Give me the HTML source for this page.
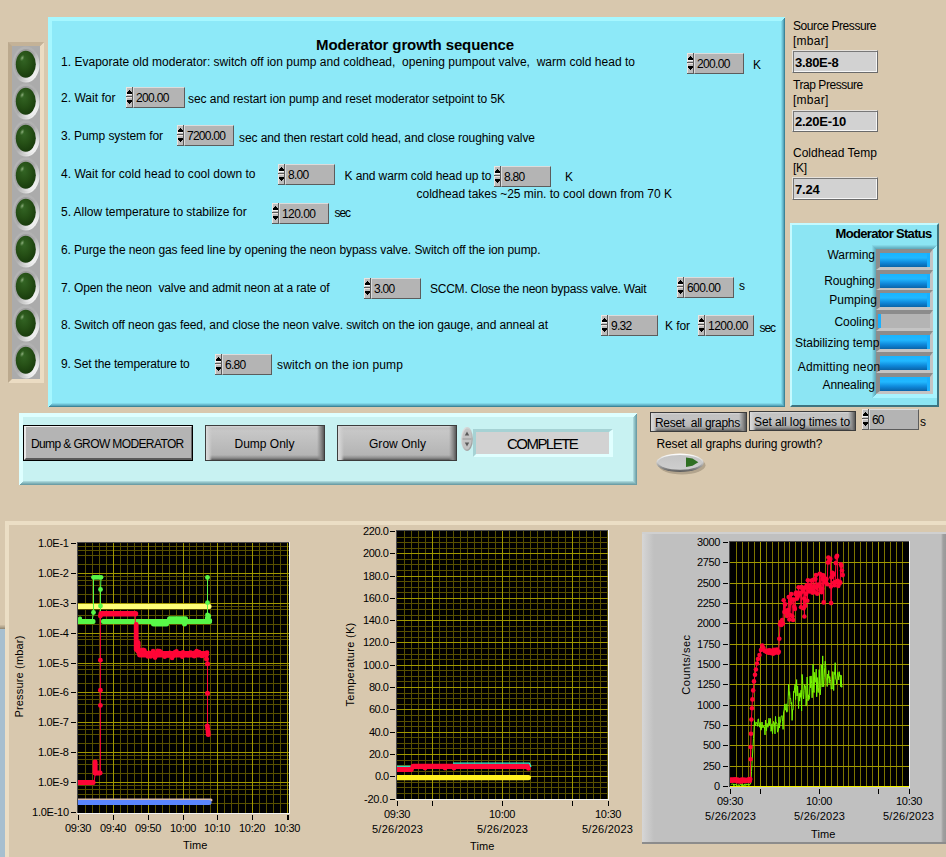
<!DOCTYPE html>
<html><head><meta charset="utf-8"><title>Moderator growth sequence</title>
<style>
html,body{margin:0;padding:0}
body{width:946px;height:857px;overflow:hidden;position:relative;background:#D8C8AE;font-family:"Liberation Sans",sans-serif;font-size:12px;color:#000}
div,span,svg{position:absolute;box-sizing:border-box}
.t{white-space:pre;line-height:1}
.num{height:21px}
.num svg{left:0;top:0}
.num .bx{left:7px;top:0;right:0;height:21px;background:#B4B4B4;border-top:1px solid #DCDCDC;border-left:1px solid #DCDCDC;border-bottom:1px solid #5C5C5C;border-right:1px solid #5C5C5C}
.ind{background:#D2D2D2;border:1px solid;border-color:#E6E2DC #6A6A6A #6A6A6A #E6E2DC;box-shadow:inset 1px 1px 0 #787878,inset -1px -1px 0 #F6F6F6}
.btn{background:#B4B4B4;border:1px solid #3C3C3C}
.btn i{position:absolute;left:0;top:0;right:0;bottom:0;border:solid;border-width:1px 1px 2px 2px;border-color:#F0F0F0 #6A6A6A #5A5A5A #E8E8E8;background:#B4B4B4}
.btn3{background:#B6B6B6;border:1px solid #484848;overflow:hidden}
.btn3 i{position:absolute;left:0;top:0;right:0;bottom:0;background:linear-gradient(to right,#DCDCDC 0,#CCCCCC 3px,rgba(190,190,190,0) 6px),linear-gradient(to left,#585858 0,#8A8A8A 3px,rgba(182,182,182,0) 7px),linear-gradient(to bottom,#D8D8D8 0,#C0C0C0 2px,rgba(182,182,182,0) 5px),linear-gradient(to top,#585858 0,#8C8C8C 2px,rgba(182,182,182,0) 5px),linear-gradient(#CBCBCB,#B0B0B0)}
.bar{background:#B4B4B4;border:solid;border-width:4px 3px 3px 4px;border-color:#8C8C8C #C4C4C4 #C4C4C4 #8C8C8C}
.bar b{position:absolute;left:0;top:0;right:0;bottom:0;background:linear-gradient(#18B4FF 0%,#22B8FF 35%,#0E86D8 70%,#0A64A8 100%)}
.bar b:after{content:"";position:absolute;right:0;top:0;bottom:0;width:3px;background:#18B0FF}
</style></head><body>
<div style="left:0;top:625px;width:5px;height:232px;background:linear-gradient(#D0C0A6 0,#B4A68E 2px,#8E8470 4px,#A7BFCF 4px)"></div><div style="left:5px;top:521px;width:960px;height:350px;background:#D8C8AE;border-top:4px solid #EBDEC5;border-left:4px solid #EBDEC5"></div><svg style="left:8px;top:42px" width="36" height="341" viewBox="0 0 36 341"><defs>
<linearGradient id="ring" x1="0.1" y1="0.1" x2="0.9" y2="0.9"><stop offset="0" stop-color="#B4B4B4"/><stop offset="0.5" stop-color="#B0B0B0"/><stop offset="0.75" stop-color="#D0D0D0"/><stop offset="1" stop-color="#FFFFFF"/></linearGradient>
<linearGradient id="ring2" x1="0.1" y1="0.1" x2="0.9" y2="0.9"><stop offset="0" stop-color="#9A9A9A"/><stop offset="0.5" stop-color="#A6A6A6"/><stop offset="0.78" stop-color="#DADADA"/><stop offset="1" stop-color="#FFFFFF"/></linearGradient>
<radialGradient id="led" cx="0.40" cy="0.34" r="0.72"><stop offset="0" stop-color="#336424"/><stop offset="0.5" stop-color="#265016"/><stop offset="1" stop-color="#17380B"/></radialGradient>
<radialGradient id="hl" cx="0.5" cy="0.5" r="0.5"><stop offset="0" stop-color="#B8D0A8" stop-opacity="0.75"/><stop offset="1" stop-color="#6C9C5C" stop-opacity="0"/></radialGradient>
</defs><rect x="0" y="0" width="36" height="341" fill="#EBDCC3"/><polygon points="0,0 36,0 32,4 4,4 4,337 0,341" fill="#BBA98E"/><polygon points="0,0 36,0 32,4 4,4" fill="#C4B297"/><rect x="4" y="4" width="28" height="333" fill="#ABABAB"/><ellipse cx="18" cy="22.5" rx="13.5" ry="18" fill="url(#ring)"/><ellipse cx="18" cy="22.5" rx="11.5" ry="15.5" fill="url(#ring2)"/><ellipse cx="17.8" cy="22.2" rx="10" ry="13.5" fill="url(#led)"/><ellipse cx="14.2" cy="16.0" rx="2.2" ry="3.6" transform="rotate(25 14.2 16.0)" fill="url(#hl)"/><ellipse cx="18" cy="59.5" rx="13.5" ry="18" fill="url(#ring)"/><ellipse cx="18" cy="59.5" rx="11.5" ry="15.5" fill="url(#ring2)"/><ellipse cx="17.8" cy="59.2" rx="10" ry="13.5" fill="url(#led)"/><ellipse cx="14.2" cy="53.0" rx="2.2" ry="3.6" transform="rotate(25 14.2 53.0)" fill="url(#hl)"/><ellipse cx="18" cy="96.5" rx="13.5" ry="18" fill="url(#ring)"/><ellipse cx="18" cy="96.5" rx="11.5" ry="15.5" fill="url(#ring2)"/><ellipse cx="17.8" cy="96.2" rx="10" ry="13.5" fill="url(#led)"/><ellipse cx="14.2" cy="90.0" rx="2.2" ry="3.6" transform="rotate(25 14.2 90.0)" fill="url(#hl)"/><ellipse cx="18" cy="133.5" rx="13.5" ry="18" fill="url(#ring)"/><ellipse cx="18" cy="133.5" rx="11.5" ry="15.5" fill="url(#ring2)"/><ellipse cx="17.8" cy="133.2" rx="10" ry="13.5" fill="url(#led)"/><ellipse cx="14.2" cy="127.0" rx="2.2" ry="3.6" transform="rotate(25 14.2 127.0)" fill="url(#hl)"/><ellipse cx="18" cy="170.5" rx="13.5" ry="18" fill="url(#ring)"/><ellipse cx="18" cy="170.5" rx="11.5" ry="15.5" fill="url(#ring2)"/><ellipse cx="17.8" cy="170.2" rx="10" ry="13.5" fill="url(#led)"/><ellipse cx="14.2" cy="164.0" rx="2.2" ry="3.6" transform="rotate(25 14.2 164.0)" fill="url(#hl)"/><ellipse cx="18" cy="207.5" rx="13.5" ry="18" fill="url(#ring)"/><ellipse cx="18" cy="207.5" rx="11.5" ry="15.5" fill="url(#ring2)"/><ellipse cx="17.8" cy="207.2" rx="10" ry="13.5" fill="url(#led)"/><ellipse cx="14.2" cy="201.0" rx="2.2" ry="3.6" transform="rotate(25 14.2 201.0)" fill="url(#hl)"/><ellipse cx="18" cy="244.5" rx="13.5" ry="18" fill="url(#ring)"/><ellipse cx="18" cy="244.5" rx="11.5" ry="15.5" fill="url(#ring2)"/><ellipse cx="17.8" cy="244.2" rx="10" ry="13.5" fill="url(#led)"/><ellipse cx="14.2" cy="238.0" rx="2.2" ry="3.6" transform="rotate(25 14.2 238.0)" fill="url(#hl)"/><ellipse cx="18" cy="281.5" rx="13.5" ry="18" fill="url(#ring)"/><ellipse cx="18" cy="281.5" rx="11.5" ry="15.5" fill="url(#ring2)"/><ellipse cx="17.8" cy="281.2" rx="10" ry="13.5" fill="url(#led)"/><ellipse cx="14.2" cy="275.0" rx="2.2" ry="3.6" transform="rotate(25 14.2 275.0)" fill="url(#hl)"/><ellipse cx="18" cy="318.5" rx="13.5" ry="18" fill="url(#ring)"/><ellipse cx="18" cy="318.5" rx="11.5" ry="15.5" fill="url(#ring2)"/><ellipse cx="17.8" cy="318.2" rx="10" ry="13.5" fill="url(#led)"/><ellipse cx="14.2" cy="312.0" rx="2.2" ry="3.6" transform="rotate(25 14.2 312.0)" fill="url(#hl)"/></svg><div style="left:48px;top:17px;width:737px;height:390px;background:#8DE9F8;box-shadow:inset 1px 1px 0 #A6F7FF,inset -1px -1px 0 #3C8498,inset 2px 2px 0 #A6F7FF,inset -2px -2px 0 #58A8BC,inset 3px 3px 0 #A6F7FF,inset -3px -3px 0 #6CC0D4,inset 4px 4px 0 #A6F7FF,inset -4px -4px 0 #80D8E8"></div><span id="t0" class="t" style="left:316px;top:37px;font-size:15px;font-weight:bold;letter-spacing:-0.117px;">Moderator growth sequence</span><span id="t1" class="t" style="left:61px;top:56px;font-size:12px;letter-spacing:0.018px;">1. Evaporate old moderator: switch off ion pump and coldhead,  opening pumpout valve,  warm cold head to</span><div class="num" style="left:687px;top:53px;width:57px"><svg width="7" height="21" viewBox="0 0 7 21" shape-rendering="crispEdges"><rect width="7" height="21" fill="#BCBCBC"/><rect x="0" y="0" width="7" height="1" fill="#EDE4E0"/><rect x="0" y="0" width="1" height="10" fill="#EDE4E0"/><rect x="0" y="7" width="6" height="1" fill="#F4F4F4"/><rect x="0" y="9" width="7" height="1" fill="#5A5A5A"/><rect x="6" y="0" width="1" height="21" fill="#5A5A5A"/><rect x="0" y="10" width="6" height="1" fill="#EDE4E0"/><rect x="0" y="10" width="1" height="11" fill="#EDE4E0"/><rect x="0" y="20" width="7" height="1" fill="#5A5A5A"/><rect x="3" y="3" width="1" height="1" fill="#000"/><rect x="2" y="4" width="3" height="1" fill="#000"/><rect x="1" y="5" width="5" height="2" fill="#000"/><rect x="1" y="13" width="5" height="2" fill="#000"/><rect x="2" y="15" width="3" height="1" fill="#000"/><rect x="3" y="16" width="1" height="1" fill="#000"/></svg><div class="bx"></div></div><span id="t2" class="t" style="left:697px;top:58px;font-size:12px;letter-spacing:-0.673px;">200.00</span><span id="t3" class="t" style="left:753px;top:59px;font-size:12px;">K</span><span id="t4" class="t" style="left:61px;top:92px;font-size:12px;letter-spacing:0.025px;">2. Wait for</span><div class="num" style="left:126px;top:87px;width:59px"><svg width="7" height="21" viewBox="0 0 7 21" shape-rendering="crispEdges"><rect width="7" height="21" fill="#BCBCBC"/><rect x="0" y="0" width="7" height="1" fill="#EDE4E0"/><rect x="0" y="0" width="1" height="10" fill="#EDE4E0"/><rect x="0" y="7" width="6" height="1" fill="#F4F4F4"/><rect x="0" y="9" width="7" height="1" fill="#5A5A5A"/><rect x="6" y="0" width="1" height="21" fill="#5A5A5A"/><rect x="0" y="10" width="6" height="1" fill="#EDE4E0"/><rect x="0" y="10" width="1" height="11" fill="#EDE4E0"/><rect x="0" y="20" width="7" height="1" fill="#5A5A5A"/><rect x="3" y="3" width="1" height="1" fill="#000"/><rect x="2" y="4" width="3" height="1" fill="#000"/><rect x="1" y="5" width="5" height="2" fill="#000"/><rect x="1" y="13" width="5" height="2" fill="#000"/><rect x="2" y="15" width="3" height="1" fill="#000"/><rect x="3" y="16" width="1" height="1" fill="#000"/></svg><div class="bx"></div></div><span id="t5" class="t" style="left:136px;top:92px;font-size:12px;letter-spacing:-0.673px;">200.00</span><span id="t6" class="t" style="left:188px;top:93px;font-size:12px;letter-spacing:-0.054px;">sec and restart ion pump and reset moderator setpoint to 5K</span><span id="t7" class="t" style="left:61px;top:130px;font-size:12px;letter-spacing:-0.079px;">3. Pump system for</span><div class="num" style="left:177px;top:125px;width:57px"><svg width="7" height="21" viewBox="0 0 7 21" shape-rendering="crispEdges"><rect width="7" height="21" fill="#BCBCBC"/><rect x="0" y="0" width="7" height="1" fill="#EDE4E0"/><rect x="0" y="0" width="1" height="10" fill="#EDE4E0"/><rect x="0" y="7" width="6" height="1" fill="#F4F4F4"/><rect x="0" y="9" width="7" height="1" fill="#5A5A5A"/><rect x="6" y="0" width="1" height="21" fill="#5A5A5A"/><rect x="0" y="10" width="6" height="1" fill="#EDE4E0"/><rect x="0" y="10" width="1" height="11" fill="#EDE4E0"/><rect x="0" y="20" width="7" height="1" fill="#5A5A5A"/><rect x="3" y="3" width="1" height="1" fill="#000"/><rect x="2" y="4" width="3" height="1" fill="#000"/><rect x="1" y="5" width="5" height="2" fill="#000"/><rect x="1" y="13" width="5" height="2" fill="#000"/><rect x="2" y="15" width="3" height="1" fill="#000"/><rect x="3" y="16" width="1" height="1" fill="#000"/></svg><div class="bx"></div></div><span id="t8" class="t" style="left:187px;top:130px;font-size:12px;letter-spacing:-0.752px;">7200.00</span><span id="t9" class="t" style="left:239px;top:132px;font-size:12px;letter-spacing:-0.088px;">sec and then restart cold head, and close roughing valve</span><span id="t10" class="t" style="left:61px;top:168px;font-size:12px;letter-spacing:0.023px;">4. Wait for cold head to cool down to</span><div class="num" style="left:278px;top:164px;width:57px"><svg width="7" height="21" viewBox="0 0 7 21" shape-rendering="crispEdges"><rect width="7" height="21" fill="#BCBCBC"/><rect x="0" y="0" width="7" height="1" fill="#EDE4E0"/><rect x="0" y="0" width="1" height="10" fill="#EDE4E0"/><rect x="0" y="7" width="6" height="1" fill="#F4F4F4"/><rect x="0" y="9" width="7" height="1" fill="#5A5A5A"/><rect x="6" y="0" width="1" height="21" fill="#5A5A5A"/><rect x="0" y="10" width="6" height="1" fill="#EDE4E0"/><rect x="0" y="10" width="1" height="11" fill="#EDE4E0"/><rect x="0" y="20" width="7" height="1" fill="#5A5A5A"/><rect x="3" y="3" width="1" height="1" fill="#000"/><rect x="2" y="4" width="3" height="1" fill="#000"/><rect x="1" y="5" width="5" height="2" fill="#000"/><rect x="1" y="13" width="5" height="2" fill="#000"/><rect x="2" y="15" width="3" height="1" fill="#000"/><rect x="3" y="16" width="1" height="1" fill="#000"/></svg><div class="bx"></div></div><span id="t11" class="t" style="left:288px;top:169px;font-size:12px;letter-spacing:-0.757px;">8.00</span><span id="t12" class="t" style="left:344.5px;top:170px;font-size:12px;letter-spacing:-0.096px;">K and warm cold head up to</span><div class="num" style="left:494px;top:166px;width:57px"><svg width="7" height="21" viewBox="0 0 7 21" shape-rendering="crispEdges"><rect width="7" height="21" fill="#BCBCBC"/><rect x="0" y="0" width="7" height="1" fill="#EDE4E0"/><rect x="0" y="0" width="1" height="10" fill="#EDE4E0"/><rect x="0" y="7" width="6" height="1" fill="#F4F4F4"/><rect x="0" y="9" width="7" height="1" fill="#5A5A5A"/><rect x="6" y="0" width="1" height="21" fill="#5A5A5A"/><rect x="0" y="10" width="6" height="1" fill="#EDE4E0"/><rect x="0" y="10" width="1" height="11" fill="#EDE4E0"/><rect x="0" y="20" width="7" height="1" fill="#5A5A5A"/><rect x="3" y="3" width="1" height="1" fill="#000"/><rect x="2" y="4" width="3" height="1" fill="#000"/><rect x="1" y="5" width="5" height="2" fill="#000"/><rect x="1" y="13" width="5" height="2" fill="#000"/><rect x="2" y="15" width="3" height="1" fill="#000"/><rect x="3" y="16" width="1" height="1" fill="#000"/></svg><div class="bx"></div></div><span id="t13" class="t" style="left:504px;top:171px;font-size:12px;letter-spacing:-0.757px;">8.80</span><span id="t14" class="t" style="left:565px;top:171px;font-size:12px;">K</span><span id="t15" class="t" style="left:416.5px;top:188px;font-size:12px;letter-spacing:-0.022px;">coldhead takes ~25 min. to cool down from 70 K</span><span id="t16" class="t" style="left:61px;top:206px;font-size:12px;letter-spacing:-0.029px;">5. Allow temperature to stabilize for</span><div class="num" style="left:272px;top:203px;width:57px"><svg width="7" height="21" viewBox="0 0 7 21" shape-rendering="crispEdges"><rect width="7" height="21" fill="#BCBCBC"/><rect x="0" y="0" width="7" height="1" fill="#EDE4E0"/><rect x="0" y="0" width="1" height="10" fill="#EDE4E0"/><rect x="0" y="7" width="6" height="1" fill="#F4F4F4"/><rect x="0" y="9" width="7" height="1" fill="#5A5A5A"/><rect x="6" y="0" width="1" height="21" fill="#5A5A5A"/><rect x="0" y="10" width="6" height="1" fill="#EDE4E0"/><rect x="0" y="10" width="1" height="11" fill="#EDE4E0"/><rect x="0" y="20" width="7" height="1" fill="#5A5A5A"/><rect x="3" y="3" width="1" height="1" fill="#000"/><rect x="2" y="4" width="3" height="1" fill="#000"/><rect x="1" y="5" width="5" height="2" fill="#000"/><rect x="1" y="13" width="5" height="2" fill="#000"/><rect x="2" y="15" width="3" height="1" fill="#000"/><rect x="3" y="16" width="1" height="1" fill="#000"/></svg><div class="bx"></div></div><span id="t17" class="t" style="left:282px;top:208px;font-size:12px;letter-spacing:-0.555px;">120.00</span><span id="t18" class="t" style="left:334.5px;top:207px;font-size:12px;letter-spacing:-1.075px;">sec</span><span id="t19" class="t" style="left:61px;top:244px;font-size:12px;letter-spacing:-0.074px;">6. Purge the neon gas feed line by opening the neon bypass valve. Switch off the ion pump.</span><span id="t20" class="t" style="left:61px;top:282px;font-size:12px;letter-spacing:-0.113px;">7. Open the neon  valve and admit neon at a rate of</span><div class="num" style="left:364px;top:278px;width:57px"><svg width="7" height="21" viewBox="0 0 7 21" shape-rendering="crispEdges"><rect width="7" height="21" fill="#BCBCBC"/><rect x="0" y="0" width="7" height="1" fill="#EDE4E0"/><rect x="0" y="0" width="1" height="10" fill="#EDE4E0"/><rect x="0" y="7" width="6" height="1" fill="#F4F4F4"/><rect x="0" y="9" width="7" height="1" fill="#5A5A5A"/><rect x="6" y="0" width="1" height="21" fill="#5A5A5A"/><rect x="0" y="10" width="6" height="1" fill="#EDE4E0"/><rect x="0" y="10" width="1" height="11" fill="#EDE4E0"/><rect x="0" y="20" width="7" height="1" fill="#5A5A5A"/><rect x="3" y="3" width="1" height="1" fill="#000"/><rect x="2" y="4" width="3" height="1" fill="#000"/><rect x="1" y="5" width="5" height="2" fill="#000"/><rect x="1" y="13" width="5" height="2" fill="#000"/><rect x="2" y="15" width="3" height="1" fill="#000"/><rect x="3" y="16" width="1" height="1" fill="#000"/></svg><div class="bx"></div></div><span id="t21" class="t" style="left:374px;top:283px;font-size:12px;letter-spacing:-0.757px;">3.00</span><span id="t22" class="t" style="left:430px;top:283px;font-size:12px;letter-spacing:-0.238px;">SCCM. Close the neon bypass valve. Wait</span><div class="num" style="left:677px;top:277px;width:57px"><svg width="7" height="21" viewBox="0 0 7 21" shape-rendering="crispEdges"><rect width="7" height="21" fill="#BCBCBC"/><rect x="0" y="0" width="7" height="1" fill="#EDE4E0"/><rect x="0" y="0" width="1" height="10" fill="#EDE4E0"/><rect x="0" y="7" width="6" height="1" fill="#F4F4F4"/><rect x="0" y="9" width="7" height="1" fill="#5A5A5A"/><rect x="6" y="0" width="1" height="21" fill="#5A5A5A"/><rect x="0" y="10" width="6" height="1" fill="#EDE4E0"/><rect x="0" y="10" width="1" height="11" fill="#EDE4E0"/><rect x="0" y="20" width="7" height="1" fill="#5A5A5A"/><rect x="3" y="3" width="1" height="1" fill="#000"/><rect x="2" y="4" width="3" height="1" fill="#000"/><rect x="1" y="5" width="5" height="2" fill="#000"/><rect x="1" y="13" width="5" height="2" fill="#000"/><rect x="2" y="15" width="3" height="1" fill="#000"/><rect x="3" y="16" width="1" height="1" fill="#000"/></svg><div class="bx"></div></div><span id="t23" class="t" style="left:687px;top:282px;font-size:12px;letter-spacing:-0.555px;">600.00</span><span id="t24" class="t" style="left:739px;top:280px;font-size:12px;">s</span><span id="t25" class="t" style="left:61px;top:319px;font-size:12px;letter-spacing:-0.099px;">8. Switch off neon gas feed, and close the neon valve. switch on the ion gauge, and anneal at</span><div class="num" style="left:601px;top:315px;width:57px"><svg width="7" height="21" viewBox="0 0 7 21" shape-rendering="crispEdges"><rect width="7" height="21" fill="#BCBCBC"/><rect x="0" y="0" width="7" height="1" fill="#EDE4E0"/><rect x="0" y="0" width="1" height="10" fill="#EDE4E0"/><rect x="0" y="7" width="6" height="1" fill="#F4F4F4"/><rect x="0" y="9" width="7" height="1" fill="#5A5A5A"/><rect x="6" y="0" width="1" height="21" fill="#5A5A5A"/><rect x="0" y="10" width="6" height="1" fill="#EDE4E0"/><rect x="0" y="10" width="1" height="11" fill="#EDE4E0"/><rect x="0" y="20" width="7" height="1" fill="#5A5A5A"/><rect x="3" y="3" width="1" height="1" fill="#000"/><rect x="2" y="4" width="3" height="1" fill="#000"/><rect x="1" y="5" width="5" height="2" fill="#000"/><rect x="1" y="13" width="5" height="2" fill="#000"/><rect x="2" y="15" width="3" height="1" fill="#000"/><rect x="3" y="16" width="1" height="1" fill="#000"/></svg><div class="bx"></div></div><span id="t26" class="t" style="left:611px;top:320px;font-size:12px;letter-spacing:-0.757px;">9.32</span><span id="t27" class="t" style="left:665px;top:320px;font-size:12px;letter-spacing:-0.076px;">K for</span><div class="num" style="left:698px;top:315px;width:56px"><svg width="7" height="21" viewBox="0 0 7 21" shape-rendering="crispEdges"><rect width="7" height="21" fill="#BCBCBC"/><rect x="0" y="0" width="7" height="1" fill="#EDE4E0"/><rect x="0" y="0" width="1" height="10" fill="#EDE4E0"/><rect x="0" y="7" width="6" height="1" fill="#F4F4F4"/><rect x="0" y="9" width="7" height="1" fill="#5A5A5A"/><rect x="6" y="0" width="1" height="21" fill="#5A5A5A"/><rect x="0" y="10" width="6" height="1" fill="#EDE4E0"/><rect x="0" y="10" width="1" height="11" fill="#EDE4E0"/><rect x="0" y="20" width="7" height="1" fill="#5A5A5A"/><rect x="3" y="3" width="1" height="1" fill="#000"/><rect x="2" y="4" width="3" height="1" fill="#000"/><rect x="1" y="5" width="5" height="2" fill="#000"/><rect x="1" y="13" width="5" height="2" fill="#000"/><rect x="2" y="15" width="3" height="1" fill="#000"/><rect x="3" y="16" width="1" height="1" fill="#000"/></svg><div class="bx"></div></div><span id="t28" class="t" style="left:708px;top:320px;font-size:12px;letter-spacing:-0.503px;">1200.00</span><span id="t29" class="t" style="left:759.5px;top:322px;font-size:12px;letter-spacing:-1.075px;">sec</span><span id="t30" class="t" style="left:61px;top:358px;font-size:12px;letter-spacing:-0.165px;">9. Set the temperature to</span><div class="num" style="left:215px;top:354px;width:57px"><svg width="7" height="21" viewBox="0 0 7 21" shape-rendering="crispEdges"><rect width="7" height="21" fill="#BCBCBC"/><rect x="0" y="0" width="7" height="1" fill="#EDE4E0"/><rect x="0" y="0" width="1" height="10" fill="#EDE4E0"/><rect x="0" y="7" width="6" height="1" fill="#F4F4F4"/><rect x="0" y="9" width="7" height="1" fill="#5A5A5A"/><rect x="6" y="0" width="1" height="21" fill="#5A5A5A"/><rect x="0" y="10" width="6" height="1" fill="#EDE4E0"/><rect x="0" y="10" width="1" height="11" fill="#EDE4E0"/><rect x="0" y="20" width="7" height="1" fill="#5A5A5A"/><rect x="3" y="3" width="1" height="1" fill="#000"/><rect x="2" y="4" width="3" height="1" fill="#000"/><rect x="1" y="5" width="5" height="2" fill="#000"/><rect x="1" y="13" width="5" height="2" fill="#000"/><rect x="2" y="15" width="3" height="1" fill="#000"/><rect x="3" y="16" width="1" height="1" fill="#000"/></svg><div class="bx"></div></div><span id="t31" class="t" style="left:225px;top:359px;font-size:12px;letter-spacing:-0.757px;">6.80</span><span id="t32" class="t" style="left:277px;top:359px;font-size:12px;letter-spacing:0.151px;">switch on the ion pump</span><span id="t33" class="t" style="left:793px;top:20px;font-size:12px;letter-spacing:-0.419px;">Source Pressure</span><span id="t34" class="t" style="left:793px;top:35px;font-size:12px;letter-spacing:0.270px;">[mbar]</span><div class="ind" style="left:792px;top:50px;width:86px;height:23px"></div><span id="t35" class="t" style="left:795px;top:56px;font-size:13px;font-weight:bold;letter-spacing:-0.315px;">3.80E-8</span><span id="t36" class="t" style="left:793px;top:79px;font-size:12px;letter-spacing:-0.448px;">Trap Pressure</span><span id="t37" class="t" style="left:793px;top:94px;font-size:12px;letter-spacing:0.270px;">[mbar]</span><div class="ind" style="left:792px;top:110px;width:86px;height:22px"></div><span id="t38" class="t" style="left:795px;top:115px;font-size:13px;font-weight:bold;letter-spacing:-0.235px;">2.20E-10</span><span id="t39" class="t" style="left:793px;top:147px;font-size:12px;letter-spacing:0.013px;">Coldhead Temp</span><span id="t40" class="t" style="left:793px;top:162px;font-size:12px;letter-spacing:-0.269px;">[K]</span><div class="ind" style="left:792px;top:177px;width:86px;height:23px"></div><span id="t41" class="t" style="left:795px;top:183px;font-size:13px;font-weight:bold;letter-spacing:-0.232px;">7.24</span><div style="left:790px;top:223px;width:149px;height:184px;background:#8CE5F3;border:2px solid;border-color:#C4FAFF #3E7480 #3E7480 #C4FAFF"></div><span id="t42" class="t" style="left:835.5px;top:227px;font-size:13px;font-weight:bold;letter-spacing:-0.671px;">Moderator Status</span><div style="left:872px;top:245px;width:65px;height:153px;background:#B4B4B4;box-shadow:inset 1px 1px 0 #84D8E6,inset -1px -1px 0 #A8F4FF,inset 2px 2px 0 #78C8D8,inset -2px -2px 0 #A8F4FF,inset 3px 3px 0 #6CBACA,inset -3px -3px 0 #A8F4FF,inset 4px 4px 0 #62AEBE,inset -4px -4px 0 #A8F4FF"></div><div class="bar" style="left:876px;top:249px;width:57px;height:21px;border-top-width:4px;border-bottom-width:3px"><b></b></div><div class="bar" style="left:876px;top:270px;width:57px;height:20px;border-top-width:4px;border-bottom-width:2px"><b></b></div><div class="bar" style="left:876px;top:290px;width:57px;height:20px;border-top-width:3px;border-bottom-width:3px"><b></b></div><div class="bar" style="left:876px;top:310px;width:57px;height:21px;border-top-width:4px;border-bottom-width:3px"></div><div class="bar" style="left:876px;top:331px;width:57px;height:21px;border-top-width:4px;border-bottom-width:3px"><b></b></div><div class="bar" style="left:876px;top:352px;width:57px;height:21px;border-top-width:4px;border-bottom-width:3px"><b></b></div><div class="bar" style="left:876px;top:373px;width:57px;height:21px;border-top-width:4px;border-bottom-width:3px"><b></b></div><div style="left:878px;top:314px;width:3px;height:14px;background:#18B0FF"></div><span id="t43" class="t" style="left:827.5px;top:249px;font-size:12px;letter-spacing:-0.010px;">Warming</span><span id="t44" class="t" style="left:824.2px;top:275px;font-size:12px;letter-spacing:-0.077px;">Roughing</span><span id="t45" class="t" style="left:829.2px;top:294px;font-size:12px;letter-spacing:0.065px;">Pumping</span><span id="t46" class="t" style="left:834.4px;top:316px;font-size:12px;letter-spacing:-0.016px;">Cooling</span><span id="t47" class="t" style="left:795px;top:337px;font-size:12px;letter-spacing:-0.027px;">Stabilizing temp</span><span id="t48" class="t" style="left:797.7px;top:361px;font-size:12px;letter-spacing:0.195px;">Admitting neon</span><span id="t49" class="t" style="left:822.5px;top:379px;font-size:12px;letter-spacing:-0.105px;">Annealing</span><div style="left:19px;top:413px;width:618px;height:72px;background:#C8F2F2;box-shadow:inset 1px 1px 0 #DEFFFF,inset -1px -1px 0 #6C9EA6,inset 2px 2px 0 #DEFFFF,inset -2px -2px 0 #7EB0B6,inset 3px 3px 0 #DEFFFF,inset -3px -3px 0 #92C2C6,inset 4px 4px 0 #DEFFFF,inset -4px -4px 0 #A8D6DA"></div><div class="btn" style="left:23px;top:425px;width:170px;height:36px;border-color:#000"><i></i></div><span id="t50" class="t" style="left:31px;top:438px;font-size:12px;letter-spacing:-0.614px;">Dump &amp; GROW MODERATOR</span><div class="btn3" style="left:205px;top:425px;width:120px;height:36px;border-color:#3C3C3C"><i></i></div><span id="t51" class="t" style="left:234.5px;top:438px;font-size:12px;letter-spacing:-0.004px;">Dump Only</span><div class="btn3" style="left:337px;top:425px;width:120px;height:36px;border-color:#3C3C3C"><i></i></div><span id="t52" class="t" style="left:369px;top:438px;font-size:12px;letter-spacing:0.037px;">Grow Only</span><svg style="left:460px;top:426px" width="14" height="26" viewBox="0 0 14 26">
<defs><linearGradient id="rs" x1="0" y1="0" x2="1" y2="1"><stop offset="0" stop-color="#E8E8E8"/><stop offset="0.5" stop-color="#C4C4C4"/><stop offset="1" stop-color="#8C8C8C"/></linearGradient></defs>
<ellipse cx="7" cy="13" rx="5.9" ry="11.9" fill="url(#rs)"/>
<ellipse cx="7" cy="13" rx="4.6" ry="10.4" fill="#C4C4C4"/>
<line x1="2.5" y1="13" x2="11.5" y2="13" stroke="#9A9A9A" stroke-width="1"/>
<polygon points="7,5.5 9.2,9.5 4.8,9.5" fill="#5A5A5A"/><polygon points="7,20.5 9.2,16.5 4.8,16.5" fill="#5A5A5A"/>
</svg><div style="left:473px;top:429px;width:140px;height:28px;background:#D2D2D2;border:solid;border-width:3px 4px 3px 3px;border-color:#A6D2D4 #E0FFFF #E0FFFF #A6D2D4"></div><span id="t53" class="t" style="left:507px;top:436px;font-size:15px;letter-spacing:-1.535px;">COMPLETE</span><div class="btn3" style="left:650px;top:412px;width:97px;height:20px;border-color:#3C3C3C"><i></i></div><span id="t54" class="t" style="left:655px;top:417px;font-size:12px;letter-spacing:-0.306px;">Reset  all graphs</span><div class="btn3" style="left:749px;top:411px;width:107px;height:20px;border-color:#3C3C3C"><i></i></div><span id="t55" class="t" style="left:754px;top:416px;font-size:12px;letter-spacing:-0.105px;">Set all log times to</span><div class="num" style="left:862px;top:409px;width:57px"><svg width="7" height="21" viewBox="0 0 7 21" shape-rendering="crispEdges"><rect width="7" height="21" fill="#BCBCBC"/><rect x="0" y="0" width="7" height="1" fill="#EDE4E0"/><rect x="0" y="0" width="1" height="10" fill="#EDE4E0"/><rect x="0" y="7" width="6" height="1" fill="#F4F4F4"/><rect x="0" y="9" width="7" height="1" fill="#5A5A5A"/><rect x="6" y="0" width="1" height="21" fill="#5A5A5A"/><rect x="0" y="10" width="6" height="1" fill="#EDE4E0"/><rect x="0" y="10" width="1" height="11" fill="#EDE4E0"/><rect x="0" y="20" width="7" height="1" fill="#5A5A5A"/><rect x="3" y="3" width="1" height="1" fill="#000"/><rect x="2" y="4" width="3" height="1" fill="#000"/><rect x="1" y="5" width="5" height="2" fill="#000"/><rect x="1" y="13" width="5" height="2" fill="#000"/><rect x="2" y="15" width="3" height="1" fill="#000"/><rect x="3" y="16" width="1" height="1" fill="#000"/></svg><div class="bx"></div></div><span id="t56" class="t" style="left:872px;top:414px;font-size:12px;letter-spacing:-0.906px;">60</span><span id="t57" class="t" style="left:920px;top:416px;font-size:12px;">s</span><span id="t58" class="t" style="left:656.5px;top:438px;font-size:12px;letter-spacing:-0.113px;">Reset all graphs during growth?</span><svg style="left:654px;top:450px" width="54" height="28" viewBox="0 0 54 28">
<defs><linearGradient id="tg" x1="0" y1="0" x2="0" y2="1"><stop offset="0" stop-color="#FFFFFF"/><stop offset="0.45" stop-color="#D0D0D0"/><stop offset="1" stop-color="#5A5A5A"/></linearGradient>
<linearGradient id="tf" x1="0" y1="0" x2="0" y2="1"><stop offset="0" stop-color="#C4C4C4"/><stop offset="1" stop-color="#CECECE"/></linearGradient></defs>
<ellipse cx="28" cy="15.2" rx="23.5" ry="9.3" fill="#9A8C76" opacity="0.6"/>
<ellipse cx="26" cy="12.8" rx="23.7" ry="9.2" fill="url(#tg)"/>
<ellipse cx="26" cy="12.3" rx="22" ry="7.4" fill="url(#tf)"/>
<polygon points="32,7.5 38.5,8.6 44.3,12.2 38.5,15.8 32,16.9" fill="#2F6F22"/>
</svg><svg style="left:69px;top:540px" width="224" height="283" viewBox="69 540 224 283"><g shape-rendering="crispEdges"><rect x="77" y="542" width="212" height="271" fill="#000"/><rect x="85" y="543" width="1" height="270" fill="#585000"/><rect x="92" y="543" width="1" height="270" fill="#585000"/><rect x="99" y="543" width="1" height="270" fill="#585000"/><rect x="106" y="543" width="1" height="270" fill="#585000"/><rect x="120" y="543" width="1" height="270" fill="#585000"/><rect x="127" y="543" width="1" height="270" fill="#585000"/><rect x="134" y="543" width="1" height="270" fill="#585000"/><rect x="141" y="543" width="1" height="270" fill="#585000"/><rect x="155" y="543" width="1" height="270" fill="#585000"/><rect x="162" y="543" width="1" height="270" fill="#585000"/><rect x="169" y="543" width="1" height="270" fill="#585000"/><rect x="176" y="543" width="1" height="270" fill="#585000"/><rect x="189" y="543" width="1" height="270" fill="#585000"/><rect x="196" y="543" width="1" height="270" fill="#585000"/><rect x="203" y="543" width="1" height="270" fill="#585000"/><rect x="210" y="543" width="1" height="270" fill="#585000"/><rect x="224" y="543" width="1" height="270" fill="#585000"/><rect x="231" y="543" width="1" height="270" fill="#585000"/><rect x="238" y="543" width="1" height="270" fill="#585000"/><rect x="245" y="543" width="1" height="270" fill="#585000"/><rect x="259" y="543" width="1" height="270" fill="#585000"/><rect x="266" y="543" width="1" height="270" fill="#585000"/><rect x="273" y="543" width="1" height="270" fill="#585000"/><rect x="280" y="543" width="1" height="270" fill="#585000"/><rect x="78" y="803" width="211" height="1" fill="#585000"/><rect x="78" y="794" width="211" height="1" fill="#585000"/><rect x="78" y="789" width="211" height="1" fill="#585000"/><rect x="78" y="785" width="211" height="1" fill="#585000"/><rect x="78" y="773" width="211" height="1" fill="#585000"/><rect x="78" y="764" width="211" height="1" fill="#585000"/><rect x="78" y="759" width="211" height="1" fill="#585000"/><rect x="78" y="755" width="211" height="1" fill="#585000"/><rect x="78" y="743" width="211" height="1" fill="#585000"/><rect x="78" y="734" width="211" height="1" fill="#585000"/><rect x="78" y="729" width="211" height="1" fill="#585000"/><rect x="78" y="725" width="211" height="1" fill="#585000"/><rect x="78" y="713" width="211" height="1" fill="#585000"/><rect x="78" y="704" width="211" height="1" fill="#585000"/><rect x="78" y="699" width="211" height="1" fill="#585000"/><rect x="78" y="695" width="211" height="1" fill="#585000"/><rect x="78" y="683" width="211" height="1" fill="#585000"/><rect x="78" y="674" width="211" height="1" fill="#585000"/><rect x="78" y="669" width="211" height="1" fill="#585000"/><rect x="78" y="665" width="211" height="1" fill="#585000"/><rect x="78" y="654" width="211" height="1" fill="#585000"/><rect x="78" y="645" width="211" height="1" fill="#585000"/><rect x="78" y="639" width="211" height="1" fill="#585000"/><rect x="78" y="636" width="211" height="1" fill="#585000"/><rect x="78" y="624" width="211" height="1" fill="#585000"/><rect x="78" y="615" width="211" height="1" fill="#585000"/><rect x="78" y="609" width="211" height="1" fill="#585000"/><rect x="78" y="606" width="211" height="1" fill="#585000"/><rect x="78" y="594" width="211" height="1" fill="#585000"/><rect x="78" y="585" width="211" height="1" fill="#585000"/><rect x="78" y="580" width="211" height="1" fill="#585000"/><rect x="78" y="576" width="211" height="1" fill="#585000"/><rect x="78" y="564" width="211" height="1" fill="#585000"/><rect x="78" y="555" width="211" height="1" fill="#585000"/><rect x="78" y="550" width="211" height="1" fill="#585000"/><rect x="78" y="546" width="211" height="1" fill="#585000"/><rect x="113" y="543" width="1" height="270" fill="#A09800"/><rect x="148" y="543" width="1" height="270" fill="#A09800"/><rect x="183" y="543" width="1" height="270" fill="#A09800"/><rect x="217" y="543" width="1" height="270" fill="#A09800"/><rect x="252" y="543" width="1" height="270" fill="#A09800"/><rect x="287" y="543" width="1" height="270" fill="#A09800"/><rect x="78" y="782" width="211" height="1" fill="#A09800"/><rect x="78" y="752" width="211" height="1" fill="#A09800"/><rect x="78" y="722" width="211" height="1" fill="#A09800"/><rect x="78" y="692" width="211" height="1" fill="#A09800"/><rect x="78" y="663" width="211" height="1" fill="#A09800"/><rect x="78" y="633" width="211" height="1" fill="#A09800"/><rect x="78" y="603" width="211" height="1" fill="#A09800"/><rect x="78" y="573" width="211" height="1" fill="#A09800"/></g><clipPath id="cp77"><rect x="78" y="543" width="211" height="270"/></clipPath><g clip-path="url(#cp77)"><rect x="70" y="604" width="141.5" height="5" rx="2" fill="#FFFF78"/><polyline fill="none" stroke="#58F848" stroke-width="1" stroke-linejoin="round" points="78.0,621.5 80.0,621.5 82.0,621.5 84.0,621.5 86.0,621.5 88.0,621.5 90.0,621.5 92.0,621.5 93.5,612.5 93.5,577.3 95.0,577.3 97.0,577.3 99.0,577.3 101.0,577.3 100.5,589.5 100.5,606.0 100.5,621.5"/><rect x="70" y="619" width="25.5" height="5" rx="2" fill="#58F848"/><rect x="78" y="616.5" width="4" height="4" rx="1.5" fill="#58F848"/><rect x="101" y="619" width="111" height="5" rx="2" fill="#58F848"/><circle cx="93.5" cy="612.5" r="2.4" fill="#58F848"/><circle cx="93.5" cy="577.3" r="2.4" fill="#58F848"/><circle cx="95.0" cy="577.3" r="2.4" fill="#58F848"/><circle cx="97.0" cy="577.3" r="2.4" fill="#58F848"/><circle cx="99.0" cy="577.3" r="2.4" fill="#58F848"/><circle cx="101.0" cy="577.3" r="2.4" fill="#58F848"/><circle cx="100.5" cy="589.5" r="2.4" fill="#58F848"/><circle cx="100.5" cy="606.0" r="2.4" fill="#58F848"/><rect x="151" y="621.5" width="18" height="5" rx="2.5" fill="#58F848"/><rect x="182" y="621.5" width="5" height="5" rx="2.5" fill="#58F848"/><rect x="167" y="616.3" width="21" height="5" rx="2.5" fill="#58F848"/><polyline fill="none" stroke="#58F848" stroke-width="1" stroke-linejoin="round" points="207.5,621.0 207.5,615.0 207.5,602.7 207.5,577.5"/><circle cx="207.5" cy="621.0" r="2.4" fill="#58F848"/><circle cx="207.5" cy="615.0" r="2.4" fill="#58F848"/><circle cx="207.5" cy="602.7" r="2.4" fill="#58F848"/><circle cx="207.5" cy="577.5" r="2.4" fill="#58F848"/><circle cx="208.5" cy="621.0" r="2.4" fill="#58F848"/><circle cx="207.5" cy="618.0" r="2.6" fill="#58F848"/><circle cx="209.5" cy="620.5" r="2.6" fill="#58F848"/><circle cx="208.5" cy="616.0" r="2.6" fill="#58F848"/><rect x="70" y="780" width="25.5" height="5" rx="2" fill="#FF0536"/><polyline fill="none" stroke="#FF0536" stroke-width="1" stroke-linejoin="round" points="94.0,782.0 95.5,772.0"/><rect x="92.6" y="759.5" width="5" height="16" rx="2.4" fill="#FF0536"/><rect x="92.6" y="770.5" width="10" height="5" rx="2.4" fill="#FF0536"/><polyline fill="none" stroke="#FF0536" stroke-width="1" stroke-linejoin="round" points="100.4,773.0 100.4,613.6"/><circle cx="100.4" cy="705.4" r="2.4" fill="#FF0536"/><circle cx="100.4" cy="690.2" r="2.4" fill="#FF0536"/><circle cx="100.4" cy="660.2" r="2.4" fill="#FF0536"/><circle cx="100.4" cy="616.0" r="2.4" fill="#FF0536"/><rect x="98.5" y="611" width="39.7" height="5.4" rx="2.6" fill="#FF0536"/><rect x="133.8" y="622" width="4.8" height="30" rx="2.4" fill="#FF0536"/><rect x="134.8" y="613" width="1" height="12" fill="#FF0536"/><rect x="137" y="651" width="72" height="6.5" rx="3" fill="#FF0536"/><rect x="135.5" y="640" width="5" height="14" rx="2.4" fill="#FF0536"/><circle cx="141.0" cy="650.2" r="2.3" fill="#FF0536"/><circle cx="143.1" cy="649.9" r="2.3" fill="#FF0536"/><circle cx="144.4" cy="650.3" r="2.3" fill="#FF0536"/><circle cx="145.8" cy="654.4" r="2.3" fill="#FF0536"/><circle cx="147.9" cy="656.4" r="2.3" fill="#FF0536"/><circle cx="149.1" cy="652.9" r="2.3" fill="#FF0536"/><circle cx="150.8" cy="656.5" r="2.3" fill="#FF0536"/><circle cx="153.1" cy="651.0" r="2.3" fill="#FF0536"/><circle cx="155.1" cy="657.6" r="2.3" fill="#FF0536"/><circle cx="156.5" cy="655.1" r="2.3" fill="#FF0536"/><circle cx="157.7" cy="650.8" r="2.3" fill="#FF0536"/><circle cx="159.7" cy="651.1" r="2.3" fill="#FF0536"/><circle cx="161.1" cy="652.4" r="2.3" fill="#FF0536"/><circle cx="162.6" cy="654.0" r="2.3" fill="#FF0536"/><circle cx="164.7" cy="656.8" r="2.3" fill="#FF0536"/><circle cx="166.5" cy="655.3" r="2.3" fill="#FF0536"/><circle cx="168.2" cy="655.5" r="2.3" fill="#FF0536"/><circle cx="169.9" cy="652.7" r="2.3" fill="#FF0536"/><circle cx="172.1" cy="657.9" r="2.3" fill="#FF0536"/><circle cx="173.6" cy="655.8" r="2.3" fill="#FF0536"/><circle cx="174.8" cy="652.4" r="2.3" fill="#FF0536"/><circle cx="176.5" cy="651.2" r="2.3" fill="#FF0536"/><circle cx="178.7" cy="653.6" r="2.3" fill="#FF0536"/><circle cx="180.4" cy="653.5" r="2.3" fill="#FF0536"/><circle cx="182.3" cy="656.8" r="2.3" fill="#FF0536"/><circle cx="183.0" cy="652.2" r="2.3" fill="#FF0536"/><circle cx="185.6" cy="654.1" r="2.3" fill="#FF0536"/><circle cx="187.4" cy="653.6" r="2.3" fill="#FF0536"/><circle cx="188.2" cy="655.2" r="2.3" fill="#FF0536"/><circle cx="190.6" cy="652.6" r="2.3" fill="#FF0536"/><circle cx="191.6" cy="653.1" r="2.3" fill="#FF0536"/><circle cx="194.2" cy="656.2" r="2.3" fill="#FF0536"/><circle cx="195.0" cy="652.5" r="2.3" fill="#FF0536"/><circle cx="196.7" cy="651.1" r="2.3" fill="#FF0536"/><circle cx="199.1" cy="652.0" r="2.3" fill="#FF0536"/><circle cx="200.6" cy="653.9" r="2.3" fill="#FF0536"/><circle cx="201.9" cy="656.0" r="2.3" fill="#FF0536"/><circle cx="203.5" cy="655.3" r="2.3" fill="#FF0536"/><circle cx="205.2" cy="653.7" r="2.3" fill="#FF0536"/><circle cx="207.0" cy="652.6" r="2.3" fill="#FF0536"/><polyline fill="none" stroke="#FF0536" stroke-width="1" stroke-linejoin="round" points="207.5,655.0 207.5,734.0"/><circle cx="206.5" cy="659.0" r="2.5" fill="#FF0536"/><circle cx="207.5" cy="663.8" r="2.5" fill="#FF0536"/><circle cx="207.5" cy="693.3" r="2.5" fill="#FF0536"/><circle cx="207.3" cy="726.0" r="2.5" fill="#FF0536"/><circle cx="207.7" cy="729.0" r="2.5" fill="#FF0536"/><circle cx="208.1" cy="732.0" r="2.5" fill="#FF0536"/><circle cx="208.3" cy="734.5" r="2.5" fill="#FF0536"/><rect x="70" y="798.5" width="142.5" height="3" rx="1.5" fill="#D8B8A8"/><rect x="70" y="800" width="141.5" height="5" rx="2.5" fill="#5A86FF"/></g><g shape-rendering="crispEdges"><rect x="77" y="542" width="1" height="271" fill="#4C4C4C"/><rect x="77" y="542" width="212" height="1" fill="#4C4C4C"/><rect x="289" y="542" width="1" height="272" fill="#F4F4F4"/><rect x="77" y="813" width="212" height="1" fill="#F4F4F4"/><rect x="71" y="812" width="5" height="1" fill="#000"/><rect x="71" y="782" width="5" height="1" fill="#000"/><rect x="71" y="752" width="5" height="1" fill="#000"/><rect x="71" y="722" width="5" height="1" fill="#000"/><rect x="71" y="692" width="5" height="1" fill="#000"/><rect x="71" y="663" width="5" height="1" fill="#000"/><rect x="71" y="633" width="5" height="1" fill="#000"/><rect x="71" y="603" width="5" height="1" fill="#000"/><rect x="71" y="573" width="5" height="1" fill="#000"/><rect x="71" y="543" width="5" height="1" fill="#000"/><rect x="78" y="815" width="1" height="5" fill="#000"/><rect x="113" y="815" width="1" height="5" fill="#000"/><rect x="148" y="815" width="1" height="5" fill="#000"/><rect x="183" y="815" width="1" height="5" fill="#000"/><rect x="217" y="815" width="1" height="5" fill="#000"/><rect x="252" y="815" width="1" height="5" fill="#000"/><rect x="287" y="815" width="2" height="5" fill="#000"/></g></svg><span id="t59" class="t" style="left:32px;top:807px;font-size:11px;letter-spacing:-0.236px;">1.0E-10</span><span id="t60" class="t" style="left:38px;top:777px;font-size:11px;letter-spacing:-0.313px;">1.0E-9</span><span id="t61" class="t" style="left:38px;top:747px;font-size:11px;letter-spacing:-0.313px;">1.0E-8</span><span id="t62" class="t" style="left:38px;top:717px;font-size:11px;letter-spacing:-0.313px;">1.0E-7</span><span id="t63" class="t" style="left:38px;top:687px;font-size:11px;letter-spacing:-0.313px;">1.0E-6</span><span id="t64" class="t" style="left:38px;top:658px;font-size:11px;letter-spacing:-0.313px;">1.0E-5</span><span id="t65" class="t" style="left:38px;top:628px;font-size:11px;letter-spacing:-0.313px;">1.0E-4</span><span id="t66" class="t" style="left:38px;top:598px;font-size:11px;letter-spacing:-0.313px;">1.0E-3</span><span id="t67" class="t" style="left:38px;top:568px;font-size:11px;letter-spacing:-0.313px;">1.0E-2</span><span id="t68" class="t" style="left:38px;top:538px;font-size:11px;letter-spacing:-0.313px;">1.0E-1</span><span id="t69" class="t" style="left:65px;top:823px;font-size:11px;letter-spacing:-0.296px;">09:30</span><span id="t70" class="t" style="left:100px;top:823px;font-size:11px;letter-spacing:-0.296px;">09:40</span><span id="t71" class="t" style="left:135px;top:823px;font-size:11px;letter-spacing:-0.296px;">09:50</span><span id="t72" class="t" style="left:170px;top:823px;font-size:11px;letter-spacing:-0.296px;">10:00</span><span id="t73" class="t" style="left:204px;top:823px;font-size:11px;letter-spacing:-0.296px;">10:10</span><span id="t74" class="t" style="left:239px;top:823px;font-size:11px;letter-spacing:-0.296px;">10:20</span><span id="t75" class="t" style="left:274px;top:823px;font-size:11px;letter-spacing:-0.296px;">10:30</span><span id="t76" class="t" style="left:183px;top:840px;font-size:11px;letter-spacing:0.129px;">Time</span><span id="t77" class="t" style="left:-22.04px;top:671.00px;font-size:11px;transform:rotate(-90deg);transform-origin:50% 50%;letter-spacing:0.175px;">Pressure (mbar)</span><svg style="left:388px;top:528px" width="224" height="281" viewBox="388 528 224 281"><g shape-rendering="crispEdges"><rect x="396" y="530" width="212" height="269" fill="#000"/><rect x="404" y="531" width="1" height="268" fill="#585000"/><rect x="411" y="531" width="1" height="268" fill="#585000"/><rect x="418" y="531" width="1" height="268" fill="#585000"/><rect x="425" y="531" width="1" height="268" fill="#585000"/><rect x="439" y="531" width="1" height="268" fill="#585000"/><rect x="446" y="531" width="1" height="268" fill="#585000"/><rect x="453" y="531" width="1" height="268" fill="#585000"/><rect x="460" y="531" width="1" height="268" fill="#585000"/><rect x="467" y="531" width="1" height="268" fill="#585000"/><rect x="474" y="531" width="1" height="268" fill="#585000"/><rect x="481" y="531" width="1" height="268" fill="#585000"/><rect x="488" y="531" width="1" height="268" fill="#585000"/><rect x="495" y="531" width="1" height="268" fill="#585000"/><rect x="509" y="531" width="1" height="268" fill="#585000"/><rect x="516" y="531" width="1" height="268" fill="#585000"/><rect x="523" y="531" width="1" height="268" fill="#585000"/><rect x="530" y="531" width="1" height="268" fill="#585000"/><rect x="537" y="531" width="1" height="268" fill="#585000"/><rect x="544" y="531" width="1" height="268" fill="#585000"/><rect x="551" y="531" width="1" height="268" fill="#585000"/><rect x="558" y="531" width="1" height="268" fill="#585000"/><rect x="565" y="531" width="1" height="268" fill="#585000"/><rect x="579" y="531" width="1" height="268" fill="#585000"/><rect x="586" y="531" width="1" height="268" fill="#585000"/><rect x="593" y="531" width="1" height="268" fill="#585000"/><rect x="600" y="531" width="1" height="268" fill="#585000"/><rect x="607" y="531" width="1" height="268" fill="#585000"/><rect x="397" y="793" width="211" height="1" fill="#585000"/><rect x="397" y="787" width="211" height="1" fill="#585000"/><rect x="397" y="782" width="211" height="1" fill="#585000"/><rect x="397" y="771" width="211" height="1" fill="#585000"/><rect x="397" y="765" width="211" height="1" fill="#585000"/><rect x="397" y="760" width="211" height="1" fill="#585000"/><rect x="397" y="748" width="211" height="1" fill="#585000"/><rect x="397" y="743" width="211" height="1" fill="#585000"/><rect x="397" y="737" width="211" height="1" fill="#585000"/><rect x="397" y="726" width="211" height="1" fill="#585000"/><rect x="397" y="721" width="211" height="1" fill="#585000"/><rect x="397" y="715" width="211" height="1" fill="#585000"/><rect x="397" y="704" width="211" height="1" fill="#585000"/><rect x="397" y="698" width="211" height="1" fill="#585000"/><rect x="397" y="693" width="211" height="1" fill="#585000"/><rect x="397" y="681" width="211" height="1" fill="#585000"/><rect x="397" y="676" width="211" height="1" fill="#585000"/><rect x="397" y="670" width="211" height="1" fill="#585000"/><rect x="397" y="659" width="211" height="1" fill="#585000"/><rect x="397" y="654" width="211" height="1" fill="#585000"/><rect x="397" y="648" width="211" height="1" fill="#585000"/><rect x="397" y="637" width="211" height="1" fill="#585000"/><rect x="397" y="631" width="211" height="1" fill="#585000"/><rect x="397" y="626" width="211" height="1" fill="#585000"/><rect x="397" y="615" width="211" height="1" fill="#585000"/><rect x="397" y="609" width="211" height="1" fill="#585000"/><rect x="397" y="603" width="211" height="1" fill="#585000"/><rect x="397" y="592" width="211" height="1" fill="#585000"/><rect x="397" y="587" width="211" height="1" fill="#585000"/><rect x="397" y="581" width="211" height="1" fill="#585000"/><rect x="397" y="570" width="211" height="1" fill="#585000"/><rect x="397" y="564" width="211" height="1" fill="#585000"/><rect x="397" y="559" width="211" height="1" fill="#585000"/><rect x="397" y="548" width="211" height="1" fill="#585000"/><rect x="397" y="542" width="211" height="1" fill="#585000"/><rect x="397" y="537" width="211" height="1" fill="#585000"/><rect x="432" y="531" width="1" height="268" fill="#A09800"/><rect x="502" y="531" width="1" height="268" fill="#A09800"/><rect x="572" y="531" width="1" height="268" fill="#A09800"/><rect x="397" y="776" width="211" height="1" fill="#A09800"/><rect x="397" y="754" width="211" height="1" fill="#A09800"/><rect x="397" y="732" width="211" height="1" fill="#A09800"/><rect x="397" y="709" width="211" height="1" fill="#A09800"/><rect x="397" y="687" width="211" height="1" fill="#A09800"/><rect x="397" y="665" width="211" height="1" fill="#A09800"/><rect x="397" y="642" width="211" height="1" fill="#A09800"/><rect x="397" y="620" width="211" height="1" fill="#A09800"/><rect x="397" y="598" width="211" height="1" fill="#A09800"/><rect x="397" y="576" width="211" height="1" fill="#A09800"/><rect x="397" y="553" width="211" height="1" fill="#A09800"/></g><clipPath id="cp396"><rect x="397" y="531" width="211" height="268"/></clipPath><g clip-path="url(#cp396)"><rect x="390" y="766.7" width="23.5" height="5.3" rx="2" fill="#FF0536"/><rect x="410.5" y="763.7" width="120" height="5.3" rx="2.6" fill="#FF0536"/><circle cx="411.5" cy="769.0" r="2.4" fill="#FF0536"/><circle cx="425.0" cy="768.0" r="2.4" fill="#FF0536"/><circle cx="445.0" cy="768.0" r="2.4" fill="#FF0536"/><circle cx="454.0" cy="768.0" r="2.4" fill="#FF0536"/><circle cx="528.5" cy="768.4" r="2.4" fill="#FF0536"/><rect x="390" y="775" width="141" height="5.2" rx="2.6" fill="#FFF020"/><polyline fill="none" stroke="#2EF2D2" stroke-width="1.2" stroke-linejoin="round" points="397.0,766.3 410.5,766.3"/><polyline fill="none" stroke="#2EF2D2" stroke-width="1.2" stroke-linejoin="round" points="453.0,763.2 529.5,763.2 531.0,767.0"/></g><g shape-rendering="crispEdges"><rect x="396" y="530" width="1" height="269" fill="#4C4C4C"/><rect x="396" y="530" width="212" height="1" fill="#4C4C4C"/><rect x="608" y="530" width="1" height="270" fill="#F4F4F4"/><rect x="396" y="799" width="212" height="1" fill="#F4F4F4"/><rect x="390" y="799" width="5" height="1" fill="#000"/><rect x="390" y="776" width="5" height="1" fill="#000"/><rect x="390" y="754" width="5" height="1" fill="#000"/><rect x="390" y="732" width="5" height="1" fill="#000"/><rect x="390" y="709" width="5" height="1" fill="#000"/><rect x="390" y="687" width="5" height="1" fill="#000"/><rect x="390" y="665" width="5" height="1" fill="#000"/><rect x="390" y="642" width="5" height="1" fill="#000"/><rect x="390" y="620" width="5" height="1" fill="#000"/><rect x="390" y="598" width="5" height="1" fill="#000"/><rect x="390" y="576" width="5" height="1" fill="#000"/><rect x="390" y="553" width="5" height="1" fill="#000"/><rect x="390" y="531" width="5" height="1" fill="#000"/><rect x="397" y="801" width="1" height="5" fill="#000"/><rect x="432" y="801" width="1" height="5" fill="#000"/><rect x="502" y="801" width="1" height="5" fill="#000"/><rect x="572" y="801" width="1" height="5" fill="#000"/><rect x="608" y="801" width="1" height="5" fill="#000"/></g></svg><span id="t78" class="t" style="left:364px;top:794px;font-size:11px;letter-spacing:-0.220px;">-20.0</span><span id="t79" class="t" style="left:375px;top:771px;font-size:11px;letter-spacing:-0.615px;">0.0</span><span id="t80" class="t" style="left:369px;top:749px;font-size:11px;letter-spacing:-0.495px;">20.0</span><span id="t81" class="t" style="left:369px;top:727px;font-size:11px;letter-spacing:-0.495px;">40.0</span><span id="t82" class="t" style="left:369px;top:704px;font-size:11px;letter-spacing:-0.495px;">60.0</span><span id="t83" class="t" style="left:369px;top:682px;font-size:11px;letter-spacing:-0.495px;">80.0</span><span id="t84" class="t" style="left:363px;top:660px;font-size:11px;letter-spacing:-0.425px;">100.0</span><span id="t85" class="t" style="left:363px;top:637px;font-size:11px;letter-spacing:-0.425px;">120.0</span><span id="t86" class="t" style="left:363px;top:615px;font-size:11px;letter-spacing:-0.425px;">140.0</span><span id="t87" class="t" style="left:363px;top:593px;font-size:11px;letter-spacing:-0.425px;">160.0</span><span id="t88" class="t" style="left:363px;top:571px;font-size:11px;letter-spacing:-0.425px;">180.0</span><span id="t89" class="t" style="left:363px;top:548px;font-size:11px;letter-spacing:-0.425px;">200.0</span><span id="t90" class="t" style="left:363px;top:526px;font-size:11px;letter-spacing:-0.425px;">220.0</span><span id="t91" class="t" style="left:384px;top:809px;font-size:11px;letter-spacing:-0.296px;">09:30</span><span id="t92" class="t" style="left:372px;top:824px;font-size:11px;letter-spacing:0.243px;">5/26/2023</span><span id="t93" class="t" style="left:489px;top:809px;font-size:11px;letter-spacing:-0.296px;">10:00</span><span id="t94" class="t" style="left:477px;top:824px;font-size:11px;letter-spacing:0.243px;">5/26/2023</span><span id="t95" class="t" style="left:595px;top:809px;font-size:11px;letter-spacing:-0.296px;">10:30</span><span id="t96" class="t" style="left:582px;top:824px;font-size:11px;letter-spacing:0.243px;">5/26/2023</span><span id="t97" class="t" style="left:470px;top:841px;font-size:11px;letter-spacing:0.129px;">Time</span><span id="t98" class="t" style="left:308.42px;top:659.00px;font-size:11px;transform:rotate(-90deg);transform-origin:50% 50%;letter-spacing:0.311px;">Temperature (K)</span><div style="left:642px;top:532px;width:304px;height:312px;background:linear-gradient(to right,#D6D6D6 0,#C0C0C0 12px,#C0C0C0 299px,#A0A0A0 301px,#989898 304px);border-top:2px solid #D0D0D0;border-bottom:2px solid #8C8C8C"></div><svg style="left:721px;top:539px" width="192" height="258" viewBox="721 539 192 258"><g shape-rendering="crispEdges"><rect x="729" y="541" width="180" height="246" fill="#000"/><rect x="736" y="542" width="1" height="245" fill="#7C7400"/><rect x="742" y="542" width="1" height="245" fill="#7C7400"/><rect x="748" y="542" width="1" height="245" fill="#7C7400"/><rect x="754" y="542" width="1" height="245" fill="#7C7400"/><rect x="766" y="542" width="1" height="245" fill="#7C7400"/><rect x="772" y="542" width="1" height="245" fill="#7C7400"/><rect x="778" y="542" width="1" height="245" fill="#7C7400"/><rect x="784" y="542" width="1" height="245" fill="#7C7400"/><rect x="789" y="542" width="1" height="245" fill="#7C7400"/><rect x="795" y="542" width="1" height="245" fill="#7C7400"/><rect x="801" y="542" width="1" height="245" fill="#7C7400"/><rect x="807" y="542" width="1" height="245" fill="#7C7400"/><rect x="813" y="542" width="1" height="245" fill="#7C7400"/><rect x="825" y="542" width="1" height="245" fill="#7C7400"/><rect x="831" y="542" width="1" height="245" fill="#7C7400"/><rect x="837" y="542" width="1" height="245" fill="#7C7400"/><rect x="843" y="542" width="1" height="245" fill="#7C7400"/><rect x="848" y="542" width="1" height="245" fill="#7C7400"/><rect x="854" y="542" width="1" height="245" fill="#7C7400"/><rect x="860" y="542" width="1" height="245" fill="#7C7400"/><rect x="866" y="542" width="1" height="245" fill="#7C7400"/><rect x="872" y="542" width="1" height="245" fill="#7C7400"/><rect x="884" y="542" width="1" height="245" fill="#7C7400"/><rect x="890" y="542" width="1" height="245" fill="#7C7400"/><rect x="896" y="542" width="1" height="245" fill="#7C7400"/><rect x="902" y="542" width="1" height="245" fill="#7C7400"/><rect x="760" y="542" width="1" height="245" fill="#A09800"/><rect x="819" y="542" width="1" height="245" fill="#A09800"/><rect x="878" y="542" width="1" height="245" fill="#A09800"/><rect x="730" y="766" width="179" height="1" fill="#A09800"/><rect x="730" y="745" width="179" height="1" fill="#A09800"/><rect x="730" y="725" width="179" height="1" fill="#A09800"/><rect x="730" y="705" width="179" height="1" fill="#A09800"/><rect x="730" y="684" width="179" height="1" fill="#A09800"/><rect x="730" y="664" width="179" height="1" fill="#A09800"/><rect x="730" y="644" width="179" height="1" fill="#A09800"/><rect x="730" y="623" width="179" height="1" fill="#A09800"/><rect x="730" y="603" width="179" height="1" fill="#A09800"/><rect x="730" y="583" width="179" height="1" fill="#A09800"/><rect x="730" y="562" width="179" height="1" fill="#A09800"/></g><clipPath id="cp729"><rect x="730" y="542" width="179" height="245"/></clipPath><g clip-path="url(#cp729)"><polyline fill="none" stroke="#78F800" stroke-width="1" stroke-linejoin="round" points="730.9,784.6 731.4,784.3 731.9,784.2 732.4,783.9 732.9,784.3 733.4,784.0 733.9,785.9 734.4,784.9 734.9,783.9 735.4,784.5 735.9,784.0 736.4,785.7 736.9,784.9 737.4,785.4 737.9,784.8 738.4,784.7 738.9,785.9 739.4,785.5 739.9,785.3 740.4,784.0 740.9,784.3 741.4,785.6 741.9,784.2 742.4,785.6 742.9,784.6 743.4,785.6 743.9,785.9 744.4,784.1 744.9,785.5 745.4,785.5 745.9,783.8 746.4,784.1 746.9,785.3 747.4,783.9 748.0,784.8 748.5,784.5 749.0,785.5 749.5,783.9 750.0,784.4 750.5,783.9 751.0,779.9 751.5,771.6 752.0,763.3 752.5,755.0 753.0,746.7 753.5,738.4 754.0,730.1 754.5,720.7 755.0,725.7 755.5,725.3 756.0,722.1 756.5,723.2 757.0,723.2 757.5,726.3 758.0,719.5 758.5,718.8 759.0,725.0 759.5,727.2 760.0,722.6 760.5,723.8 761.0,730.2 761.5,728.0 762.0,722.0 762.5,726.8 763.0,727.9 763.5,725.8 764.0,727.0 764.5,727.0 765.0,734.9 765.5,720.0 766.0,726.4 766.5,730.9 767.0,723.3 767.5,726.1 768.0,727.3 768.5,723.1 769.0,718.2 769.5,725.1 770.0,720.9 770.5,718.5 771.0,731.3 771.5,729.2 772.0,723.8 772.5,733.8 773.0,727.9 773.5,721.4 774.0,722.2 774.5,724.0 775.0,733.9 775.5,716.4 776.0,723.6 776.5,722.5 777.0,723.4 777.5,732.2 778.0,730.9 778.5,729.8 779.0,716.8 779.5,727.9 780.0,723.6 780.5,722.3 781.0,716.9 781.6,715.8 782.1,715.6 782.6,721.7 783.1,729.4 783.6,711.9 784.1,710.0 784.6,704.0 785.1,709.1 785.6,710.2 786.1,703.8 786.6,712.0 787.1,712.2 787.6,711.5 788.1,700.1 788.6,684.3 789.1,695.3 789.6,691.7 790.1,699.0 790.6,698.3 791.1,704.2 791.6,702.4 792.1,720.4 792.6,709.5 793.1,709.9 793.6,691.3 794.1,692.5 794.6,688.0 795.1,684.1 795.6,699.6 796.1,687.6 796.6,679.6 797.1,696.0 797.6,686.2 798.1,696.6 798.6,708.6 799.1,693.4 799.6,701.1 800.1,692.8 800.6,697.3 801.1,690.2 801.6,710.9 802.1,674.4 802.6,680.2 803.1,694.5 803.6,698.9 804.1,690.7 804.6,684.6 805.1,686.4 805.6,686.2 806.1,706.1 806.6,698.6 807.1,677.0 807.6,686.1 808.1,700.8 808.6,694.8 809.1,699.4 809.6,695.4 810.1,676.2 810.6,687.8 811.1,675.9 811.6,683.6 812.1,697.8 812.6,690.1 813.1,664.3 813.6,690.4 814.1,692.5 814.7,672.3 815.2,681.8 815.7,682.3 816.2,669.1 816.7,696.8 817.2,677.5 817.7,690.0 818.2,692.6 818.7,687.1 819.2,669.6 819.7,680.5 820.2,694.9 820.7,688.2 821.2,664.9 821.7,668.9 822.2,687.0 822.7,655.9 823.2,679.9 823.7,686.8 824.2,677.2 824.7,667.4 825.2,661.2 825.7,665.9 826.2,678.2 826.7,679.0 827.2,686.5 827.7,674.0 828.2,678.2 828.7,670.5 829.2,683.4 829.7,676.4 830.2,679.3 830.7,681.7 831.2,689.2 831.7,687.5 832.2,689.1 832.7,671.6 833.2,676.3 833.7,690.5 834.2,672.2 834.7,674.5 835.2,662.7 835.7,679.3 836.2,679.4 836.7,684.2 837.2,676.1 837.7,672.4 838.2,675.6 838.7,679.9 839.2,671.7 839.7,676.4 840.2,674.9 840.7,686.7 841.2,675.3 841.7,687.3 842.2,685.8"/><polyline fill="none" stroke="#FF0536" stroke-width="1" stroke-linejoin="round" points="730.0,780.1 730.5,779.7 731.1,780.8 731.6,779.6 732.2,780.6 732.7,780.2 733.3,779.5 733.8,780.5 734.4,779.5 734.9,780.4 735.5,779.6 736.0,779.6 736.6,780.3 737.1,781.2 737.7,779.7 738.2,779.9 738.8,780.8 739.3,781.5 739.9,780.7 740.4,780.3 741.0,781.5 741.5,779.5 742.1,781.3 742.6,780.0 743.2,779.7 743.7,779.7 744.3,780.1 744.8,781.2 745.4,779.8 745.9,780.7 746.5,780.8 747.0,780.2 747.6,780.6 748.1,779.5 748.7,779.5 749.2,779.9 749.8,780.9 750.3,779.0 750.6,747.0 750.6,759.2 751.0,733.7 751.4,719.5 752.0,708.3 752.4,699.4 753.2,690.4 754.0,681.4 755.0,674.7 755.9,669.5 757.0,663.5 758.0,659.0 759.5,655.0 761.0,650.0 762.2,645.5 763.5,648.0 765.0,651.0 765.6,651.2 766.2,650.7 766.8,651.9 767.4,651.3 768.0,650.6 768.6,652.8 769.2,652.4 769.8,650.4 770.4,651.8 771.0,651.6 771.6,653.2 772.2,652.5 772.8,650.6 773.4,653.6 774.0,649.8 774.6,651.1 775.2,652.6 775.8,650.0 776.4,651.5 777.0,649.5 777.6,652.2 778.2,652.7 778.8,651.8 779.3,638.7 780.0,624.5 780.6,622.0 781.4,625.0 782.2,620.0 783.0,623.5 783.7,600.2 784.4,612.0 785.0,604.4 785.6,612.5 786.2,610.9 786.9,616.0 787.5,613.5 788.1,610.0 788.7,597.0 789.3,619.5 790.0,615.0 790.6,602.8 791.2,594.0 791.8,599.5 792.4,616.2 793.1,620.0 793.7,599.6 794.3,606.7 794.9,608.9 795.5,593.9 796.2,592.6 796.8,598.7 797.4,597.6 798.0,595.8 798.6,587.3 799.3,593.6 799.9,593.8 800.5,593.1 801.1,607.3 801.7,587.1 802.4,588.9 803.0,591.4 803.6,608.2 804.2,598.5 804.4,616.5 804.8,587.8 805.5,605.7 806.1,594.0 806.7,585.2 807.3,600.8 807.9,580.2 808.6,587.0 809.2,591.4 809.8,587.6 810.4,584.9 811.0,588.1 811.7,580.5 812.3,592.6 812.9,590.4 813.5,579.8 814.1,586.4 814.8,592.2 815.4,579.1 816.0,575.0 816.6,587.8 817.2,593.8 817.9,584.7 818.5,584.7 819.1,585.7 819.7,573.8 820.3,590.6 821.0,574.7 821.6,592.2 822.2,588.8 822.8,578.9 823.4,575.4 823.7,602.4 824.1,577.3 824.7,580.8 825.3,582.1 825.9,582.0 826.5,579.0 827.2,584.2 827.8,562.5 828.4,557.5 829.0,562.1 829.6,560.3 830.3,558.9 830.9,586.4 831.1,603.1 831.5,577.2 832.1,572.9 832.7,573.1 833.4,574.7 834.0,582.7 834.6,585.3 835.2,582.0 835.8,563.1 836.5,557.1 837.1,555.8 837.7,580.8 838.3,585.9 838.9,582.7 839.6,583.5 840.2,582.3 840.8,564.3 841.4,565.8 842.0,570.5 842.7,575.1"/><circle cx="730.0" cy="780.1" r="2.3" fill="#FF0536"/><circle cx="730.5" cy="779.7" r="2.3" fill="#FF0536"/><circle cx="731.1" cy="780.8" r="2.3" fill="#FF0536"/><circle cx="731.6" cy="779.6" r="2.3" fill="#FF0536"/><circle cx="732.2" cy="780.6" r="2.3" fill="#FF0536"/><circle cx="732.7" cy="780.2" r="2.3" fill="#FF0536"/><circle cx="733.3" cy="779.5" r="2.3" fill="#FF0536"/><circle cx="733.8" cy="780.5" r="2.3" fill="#FF0536"/><circle cx="734.4" cy="779.5" r="2.3" fill="#FF0536"/><circle cx="734.9" cy="780.4" r="2.3" fill="#FF0536"/><circle cx="735.5" cy="779.6" r="2.3" fill="#FF0536"/><circle cx="736.0" cy="779.6" r="2.3" fill="#FF0536"/><circle cx="736.6" cy="780.3" r="2.3" fill="#FF0536"/><circle cx="737.1" cy="781.2" r="2.3" fill="#FF0536"/><circle cx="737.7" cy="779.7" r="2.3" fill="#FF0536"/><circle cx="738.2" cy="779.9" r="2.3" fill="#FF0536"/><circle cx="738.8" cy="780.8" r="2.3" fill="#FF0536"/><circle cx="739.3" cy="781.5" r="2.3" fill="#FF0536"/><circle cx="739.9" cy="780.7" r="2.3" fill="#FF0536"/><circle cx="740.4" cy="780.3" r="2.3" fill="#FF0536"/><circle cx="741.0" cy="781.5" r="2.3" fill="#FF0536"/><circle cx="741.5" cy="779.5" r="2.3" fill="#FF0536"/><circle cx="742.1" cy="781.3" r="2.3" fill="#FF0536"/><circle cx="742.6" cy="780.0" r="2.3" fill="#FF0536"/><circle cx="743.2" cy="779.7" r="2.3" fill="#FF0536"/><circle cx="743.7" cy="779.7" r="2.3" fill="#FF0536"/><circle cx="744.3" cy="780.1" r="2.3" fill="#FF0536"/><circle cx="744.8" cy="781.2" r="2.3" fill="#FF0536"/><circle cx="745.4" cy="779.8" r="2.3" fill="#FF0536"/><circle cx="745.9" cy="780.7" r="2.3" fill="#FF0536"/><circle cx="746.5" cy="780.8" r="2.3" fill="#FF0536"/><circle cx="747.0" cy="780.2" r="2.3" fill="#FF0536"/><circle cx="747.6" cy="780.6" r="2.3" fill="#FF0536"/><circle cx="748.1" cy="779.5" r="2.3" fill="#FF0536"/><circle cx="748.7" cy="779.5" r="2.3" fill="#FF0536"/><circle cx="749.2" cy="779.9" r="2.3" fill="#FF0536"/><circle cx="749.8" cy="780.9" r="2.3" fill="#FF0536"/><circle cx="750.3" cy="779.0" r="2.3" fill="#FF0536"/><circle cx="750.6" cy="747.0" r="2.3" fill="#FF0536"/><circle cx="750.6" cy="759.2" r="2.3" fill="#FF0536"/><circle cx="751.0" cy="733.7" r="2.3" fill="#FF0536"/><circle cx="751.4" cy="719.5" r="2.3" fill="#FF0536"/><circle cx="752.0" cy="708.3" r="2.3" fill="#FF0536"/><circle cx="752.4" cy="699.4" r="2.3" fill="#FF0536"/><circle cx="753.2" cy="690.4" r="2.3" fill="#FF0536"/><circle cx="754.0" cy="681.4" r="2.3" fill="#FF0536"/><circle cx="755.0" cy="674.7" r="2.3" fill="#FF0536"/><circle cx="755.9" cy="669.5" r="2.3" fill="#FF0536"/><circle cx="757.0" cy="663.5" r="2.3" fill="#FF0536"/><circle cx="758.0" cy="659.0" r="2.3" fill="#FF0536"/><circle cx="759.5" cy="655.0" r="2.3" fill="#FF0536"/><circle cx="761.0" cy="650.0" r="2.3" fill="#FF0536"/><circle cx="762.2" cy="645.5" r="2.3" fill="#FF0536"/><circle cx="763.5" cy="648.0" r="2.3" fill="#FF0536"/><circle cx="765.0" cy="651.0" r="2.3" fill="#FF0536"/><circle cx="765.6" cy="651.2" r="2.3" fill="#FF0536"/><circle cx="766.2" cy="650.7" r="2.3" fill="#FF0536"/><circle cx="766.8" cy="651.9" r="2.3" fill="#FF0536"/><circle cx="767.4" cy="651.3" r="2.3" fill="#FF0536"/><circle cx="768.0" cy="650.6" r="2.3" fill="#FF0536"/><circle cx="768.6" cy="652.8" r="2.3" fill="#FF0536"/><circle cx="769.2" cy="652.4" r="2.3" fill="#FF0536"/><circle cx="769.8" cy="650.4" r="2.3" fill="#FF0536"/><circle cx="770.4" cy="651.8" r="2.3" fill="#FF0536"/><circle cx="771.0" cy="651.6" r="2.3" fill="#FF0536"/><circle cx="771.6" cy="653.2" r="2.3" fill="#FF0536"/><circle cx="772.2" cy="652.5" r="2.3" fill="#FF0536"/><circle cx="772.8" cy="650.6" r="2.3" fill="#FF0536"/><circle cx="773.4" cy="653.6" r="2.3" fill="#FF0536"/><circle cx="774.0" cy="649.8" r="2.3" fill="#FF0536"/><circle cx="774.6" cy="651.1" r="2.3" fill="#FF0536"/><circle cx="775.2" cy="652.6" r="2.3" fill="#FF0536"/><circle cx="775.8" cy="650.0" r="2.3" fill="#FF0536"/><circle cx="776.4" cy="651.5" r="2.3" fill="#FF0536"/><circle cx="777.0" cy="649.5" r="2.3" fill="#FF0536"/><circle cx="777.6" cy="652.2" r="2.3" fill="#FF0536"/><circle cx="778.2" cy="652.7" r="2.3" fill="#FF0536"/><circle cx="778.8" cy="651.8" r="2.3" fill="#FF0536"/><circle cx="779.3" cy="638.7" r="2.3" fill="#FF0536"/><circle cx="780.0" cy="624.5" r="2.3" fill="#FF0536"/><circle cx="780.6" cy="622.0" r="2.3" fill="#FF0536"/><circle cx="781.4" cy="625.0" r="2.3" fill="#FF0536"/><circle cx="782.2" cy="620.0" r="2.3" fill="#FF0536"/><circle cx="783.0" cy="623.5" r="2.3" fill="#FF0536"/><circle cx="783.7" cy="600.2" r="2.3" fill="#FF0536"/><circle cx="784.4" cy="612.0" r="2.3" fill="#FF0536"/><circle cx="785.0" cy="604.4" r="2.3" fill="#FF0536"/><circle cx="785.6" cy="612.5" r="2.3" fill="#FF0536"/><circle cx="786.2" cy="610.9" r="2.3" fill="#FF0536"/><circle cx="786.9" cy="616.0" r="2.3" fill="#FF0536"/><circle cx="787.5" cy="613.5" r="2.3" fill="#FF0536"/><circle cx="788.1" cy="610.0" r="2.3" fill="#FF0536"/><circle cx="788.7" cy="597.0" r="2.3" fill="#FF0536"/><circle cx="789.3" cy="619.5" r="2.3" fill="#FF0536"/><circle cx="790.0" cy="615.0" r="2.3" fill="#FF0536"/><circle cx="790.6" cy="602.8" r="2.3" fill="#FF0536"/><circle cx="791.2" cy="594.0" r="2.3" fill="#FF0536"/><circle cx="791.8" cy="599.5" r="2.3" fill="#FF0536"/><circle cx="792.4" cy="616.2" r="2.3" fill="#FF0536"/><circle cx="793.1" cy="620.0" r="2.3" fill="#FF0536"/><circle cx="793.7" cy="599.6" r="2.3" fill="#FF0536"/><circle cx="794.3" cy="606.7" r="2.3" fill="#FF0536"/><circle cx="794.9" cy="608.9" r="2.3" fill="#FF0536"/><circle cx="795.5" cy="593.9" r="2.3" fill="#FF0536"/><circle cx="796.2" cy="592.6" r="2.3" fill="#FF0536"/><circle cx="796.8" cy="598.7" r="2.3" fill="#FF0536"/><circle cx="797.4" cy="597.6" r="2.3" fill="#FF0536"/><circle cx="798.0" cy="595.8" r="2.3" fill="#FF0536"/><circle cx="798.6" cy="587.3" r="2.3" fill="#FF0536"/><circle cx="799.3" cy="593.6" r="2.3" fill="#FF0536"/><circle cx="799.9" cy="593.8" r="2.3" fill="#FF0536"/><circle cx="800.5" cy="593.1" r="2.3" fill="#FF0536"/><circle cx="801.1" cy="607.3" r="2.3" fill="#FF0536"/><circle cx="801.7" cy="587.1" r="2.3" fill="#FF0536"/><circle cx="802.4" cy="588.9" r="2.3" fill="#FF0536"/><circle cx="803.0" cy="591.4" r="2.3" fill="#FF0536"/><circle cx="803.6" cy="608.2" r="2.3" fill="#FF0536"/><circle cx="804.2" cy="598.5" r="2.3" fill="#FF0536"/><circle cx="804.4" cy="616.5" r="2.3" fill="#FF0536"/><circle cx="804.8" cy="587.8" r="2.3" fill="#FF0536"/><circle cx="805.5" cy="605.7" r="2.3" fill="#FF0536"/><circle cx="806.1" cy="594.0" r="2.3" fill="#FF0536"/><circle cx="806.7" cy="585.2" r="2.3" fill="#FF0536"/><circle cx="807.3" cy="600.8" r="2.3" fill="#FF0536"/><circle cx="807.9" cy="580.2" r="2.3" fill="#FF0536"/><circle cx="808.6" cy="587.0" r="2.3" fill="#FF0536"/><circle cx="809.2" cy="591.4" r="2.3" fill="#FF0536"/><circle cx="809.8" cy="587.6" r="2.3" fill="#FF0536"/><circle cx="810.4" cy="584.9" r="2.3" fill="#FF0536"/><circle cx="811.0" cy="588.1" r="2.3" fill="#FF0536"/><circle cx="811.7" cy="580.5" r="2.3" fill="#FF0536"/><circle cx="812.3" cy="592.6" r="2.3" fill="#FF0536"/><circle cx="812.9" cy="590.4" r="2.3" fill="#FF0536"/><circle cx="813.5" cy="579.8" r="2.3" fill="#FF0536"/><circle cx="814.1" cy="586.4" r="2.3" fill="#FF0536"/><circle cx="814.8" cy="592.2" r="2.3" fill="#FF0536"/><circle cx="815.4" cy="579.1" r="2.3" fill="#FF0536"/><circle cx="816.0" cy="575.0" r="2.3" fill="#FF0536"/><circle cx="816.6" cy="587.8" r="2.3" fill="#FF0536"/><circle cx="817.2" cy="593.8" r="2.3" fill="#FF0536"/><circle cx="817.9" cy="584.7" r="2.3" fill="#FF0536"/><circle cx="818.5" cy="584.7" r="2.3" fill="#FF0536"/><circle cx="819.1" cy="585.7" r="2.3" fill="#FF0536"/><circle cx="819.7" cy="573.8" r="2.3" fill="#FF0536"/><circle cx="820.3" cy="590.6" r="2.3" fill="#FF0536"/><circle cx="821.0" cy="574.7" r="2.3" fill="#FF0536"/><circle cx="821.6" cy="592.2" r="2.3" fill="#FF0536"/><circle cx="822.2" cy="588.8" r="2.3" fill="#FF0536"/><circle cx="822.8" cy="578.9" r="2.3" fill="#FF0536"/><circle cx="823.4" cy="575.4" r="2.3" fill="#FF0536"/><circle cx="823.7" cy="602.4" r="2.3" fill="#FF0536"/><circle cx="824.1" cy="577.3" r="2.3" fill="#FF0536"/><circle cx="824.7" cy="580.8" r="2.3" fill="#FF0536"/><circle cx="825.3" cy="582.1" r="2.3" fill="#FF0536"/><circle cx="825.9" cy="582.0" r="2.3" fill="#FF0536"/><circle cx="826.5" cy="579.0" r="2.3" fill="#FF0536"/><circle cx="827.2" cy="584.2" r="2.3" fill="#FF0536"/><circle cx="827.8" cy="562.5" r="2.3" fill="#FF0536"/><circle cx="828.4" cy="557.5" r="2.3" fill="#FF0536"/><circle cx="829.0" cy="562.1" r="2.3" fill="#FF0536"/><circle cx="829.6" cy="560.3" r="2.3" fill="#FF0536"/><circle cx="830.3" cy="558.9" r="2.3" fill="#FF0536"/><circle cx="830.9" cy="586.4" r="2.3" fill="#FF0536"/><circle cx="831.1" cy="603.1" r="2.3" fill="#FF0536"/><circle cx="831.5" cy="577.2" r="2.3" fill="#FF0536"/><circle cx="832.1" cy="572.9" r="2.3" fill="#FF0536"/><circle cx="832.7" cy="573.1" r="2.3" fill="#FF0536"/><circle cx="833.4" cy="574.7" r="2.3" fill="#FF0536"/><circle cx="834.0" cy="582.7" r="2.3" fill="#FF0536"/><circle cx="834.6" cy="585.3" r="2.3" fill="#FF0536"/><circle cx="835.2" cy="582.0" r="2.3" fill="#FF0536"/><circle cx="835.8" cy="563.1" r="2.3" fill="#FF0536"/><circle cx="836.5" cy="557.1" r="2.3" fill="#FF0536"/><circle cx="837.1" cy="555.8" r="2.3" fill="#FF0536"/><circle cx="837.7" cy="580.8" r="2.3" fill="#FF0536"/><circle cx="838.3" cy="585.9" r="2.3" fill="#FF0536"/><circle cx="838.9" cy="582.7" r="2.3" fill="#FF0536"/><circle cx="839.6" cy="583.5" r="2.3" fill="#FF0536"/><circle cx="840.2" cy="582.3" r="2.3" fill="#FF0536"/><circle cx="840.8" cy="564.3" r="2.3" fill="#FF0536"/><circle cx="841.4" cy="565.8" r="2.3" fill="#FF0536"/><circle cx="842.0" cy="570.5" r="2.3" fill="#FF0536"/><circle cx="842.7" cy="575.1" r="2.3" fill="#FF0536"/></g><g shape-rendering="crispEdges"><rect x="729" y="541" width="1" height="246" fill="#4C4C4C"/><rect x="729" y="541" width="180" height="1" fill="#4C4C4C"/><rect x="909" y="541" width="1" height="247" fill="#F4F4F4"/><rect x="729" y="787" width="180" height="1" fill="#C8C8C8"/><rect x="730" y="786" width="179" height="1" fill="#F4F400"/><rect x="723" y="786" width="5" height="1" fill="#000"/><rect x="723" y="766" width="5" height="1" fill="#000"/><rect x="723" y="745" width="5" height="1" fill="#000"/><rect x="723" y="725" width="5" height="1" fill="#000"/><rect x="723" y="705" width="5" height="1" fill="#000"/><rect x="723" y="684" width="5" height="1" fill="#000"/><rect x="723" y="664" width="5" height="1" fill="#000"/><rect x="723" y="644" width="5" height="1" fill="#000"/><rect x="723" y="623" width="5" height="1" fill="#000"/><rect x="723" y="603" width="5" height="1" fill="#000"/><rect x="723" y="583" width="5" height="1" fill="#000"/><rect x="723" y="562" width="5" height="1" fill="#000"/><rect x="723" y="542" width="5" height="1" fill="#000"/><rect x="730" y="789" width="1" height="5" fill="#000"/><rect x="760" y="789" width="1" height="5" fill="#000"/><rect x="819" y="789" width="1" height="5" fill="#000"/><rect x="878" y="789" width="1" height="5" fill="#000"/><rect x="909" y="789" width="1" height="5" fill="#000"/></g></svg><span id="t99" class="t" style="left:714px;top:781px;font-size:11px;">0</span><span id="t100" class="t" style="left:703px;top:761px;font-size:11px;letter-spacing:-0.428px;">250</span><span id="t101" class="t" style="left:703px;top:740px;font-size:11px;letter-spacing:-0.428px;">500</span><span id="t102" class="t" style="left:703px;top:720px;font-size:11px;letter-spacing:-0.428px;">750</span><span id="t103" class="t" style="left:697px;top:700px;font-size:11px;letter-spacing:-0.361px;">1000</span><span id="t104" class="t" style="left:697px;top:679px;font-size:11px;letter-spacing:-0.361px;">1250</span><span id="t105" class="t" style="left:697px;top:659px;font-size:11px;letter-spacing:-0.361px;">1500</span><span id="t106" class="t" style="left:697px;top:639px;font-size:11px;letter-spacing:-0.361px;">1750</span><span id="t107" class="t" style="left:697px;top:618px;font-size:11px;letter-spacing:-0.361px;">2000</span><span id="t108" class="t" style="left:697px;top:598px;font-size:11px;letter-spacing:-0.361px;">2250</span><span id="t109" class="t" style="left:697px;top:578px;font-size:11px;letter-spacing:-0.361px;">2500</span><span id="t110" class="t" style="left:697px;top:557px;font-size:11px;letter-spacing:-0.361px;">2750</span><span id="t111" class="t" style="left:697px;top:537px;font-size:11px;letter-spacing:-0.361px;">3000</span><span id="t112" class="t" style="left:717px;top:796px;font-size:11px;letter-spacing:-0.296px;">09:30</span><span id="t113" class="t" style="left:705px;top:811px;font-size:11px;letter-spacing:0.243px;">5/26/2023</span><span id="t114" class="t" style="left:806px;top:796px;font-size:11px;letter-spacing:-0.296px;">10:00</span><span id="t115" class="t" style="left:794px;top:811px;font-size:11px;letter-spacing:0.243px;">5/26/2023</span><span id="t116" class="t" style="left:896px;top:796px;font-size:11px;letter-spacing:-0.296px;">10:30</span><span id="t117" class="t" style="left:883px;top:811px;font-size:11px;letter-spacing:0.243px;">5/26/2023</span><span id="t118" class="t" style="left:811px;top:829px;font-size:11px;letter-spacing:0.129px;">Time</span><span id="t119" class="t" style="left:655.87px;top:659.00px;font-size:11px;transform:rotate(-90deg);transform-origin:50% 50%;letter-spacing:0.523px;">Counts/sec</span></body></html>
